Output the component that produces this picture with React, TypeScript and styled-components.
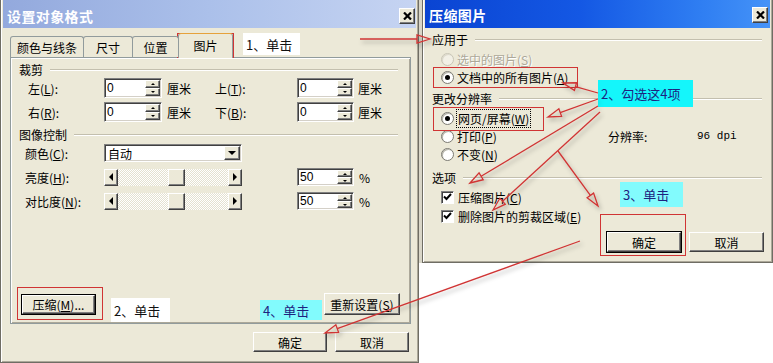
import styled, { createGlobalStyle, css } from 'styled-components';

const RED = '#d03434';
const FACE = '#ece9d8';

const GlobalStyle = createGlobalStyle`
  html, body { margin: 0; padding: 0; background: #fff; }
  body {
    font-family: "Noto Sans CJK SC", "Liberation Sans", sans-serif;
    font-size: 12px;
    color: #000;
  }
`;

const Stage = styled.div`
  position: relative;
  width: 773px;
  height: 363px;
  display: flex;
  overflow: hidden;
  background: #fff;
`;

const Window = styled.div<{ $width: number; $height: number }>`
  box-sizing: border-box;
  flex: none;
  width: ${(p) => p.$width}px;
  height: ${(p) => p.$height}px;
  display: flex;
  flex-direction: column;
  padding: 0 2px;
  background: ${FACE};
  border: 1px solid #6f6d64;
  border-top: none;
  box-shadow: inset 1px 0 #fff, inset -1px -1px #aca899;
`;

const TitleBar = styled.div<{ $active?: boolean }>`
  box-sizing: border-box;
  flex: none;
  height: 28px;
  display: flex;
  align-items: center;
  justify-content: space-between;
  padding: ${(p) => (p.$active ? '1px 2px 0 4px' : '4px 1px 0 4px')};
  background: ${(p) =>
    p.$active
      ? 'linear-gradient(90deg, #0a44d2 0%, #1458e4 45%, #2f7ef2 80%, #4593f8 100%)'
      : 'linear-gradient(90deg, #93a9dd 0%, #abc0ea 50%, #c6d4f2 100%)'};
`;

const Title = styled.span`
  font-size: 14px;
  font-weight: bold;
  color: #fff;
  letter-spacing: 0.4px;
`;

const CloseButton = styled.div`
  box-sizing: border-box;
  width: 16px;
  height: 16px;
  display: flex;
  align-items: center;
  justify-content: center;
  background: ${FACE};
  border: 1px solid;
  border-color: #fff #404040 #404040 #fff;
  box-shadow: inset -1px -1px #808080;
`;

const CloseIcon = () => (
  <svg width="9" height="8" viewBox="0 0 9 8">
    <path d="M1 0.5 L8 7.5 M8 0.5 L1 7.5" stroke="#000" strokeWidth="2.2" />
  </svg>
);

/* ---------- left dialog ---------- */

const LeftBody = styled.div`
  flex: 1;
  display: flex;
  flex-direction: column;
  padding: 5px 5px 0 7px;
`;

const TabStrip = styled.div`
  display: flex;
  align-items: flex-end;
  height: 24px;
  position: relative;
  z-index: 1;
`;

const Tab = styled.div<{ $width: number; $active?: boolean }>`
  box-sizing: border-box;
  width: ${(p) => p.$width}px;
  height: ${(p) => (p.$active ? 25 : 21)}px;
  display: flex;
  align-items: center;
  justify-content: center;
  border: 1px solid #919b9c;
  border-bottom: none;
  border-radius: 3px 3px 0 0;
  background: ${FACE};
  margin-right: -1px;
  ${(p) =>
    p.$active &&
    css`
      margin-bottom: -1px;
      padding-bottom: 1px;
      border-top-color: #e6a23c;
    `}
`;

const Panel = styled.div`
  box-sizing: border-box;
  height: 267px;
  display: flex;
  flex-direction: column;
  padding: 5px 10px 8px 8px;
  border: 1px solid #919b9c;
  box-shadow: inset 1px 1px #fff, inset -1px -1px #aca899;
`;

const GroupHeader = styled.div<{ $gap?: number }>`
  display: flex;
  align-items: center;
  gap: 7px;
  height: 14px;
  line-height: 14px;
  margin-top: ${(p) => p.$gap ?? 0}px;
  margin-right: 2px;
  white-space: nowrap;

  &::after {
    content: '';
    flex: 1;
    border-top: 1px solid #c3bfae;
    border-bottom: 1px solid #fff;
  }
`;

const FormRows = styled.div<{ $gap: number; $top: number }>`
  display: flex;
  flex-direction: column;
  gap: ${(p) => p.$gap}px;
  margin-top: ${(p) => p.$top}px;
`;

const FormRow = styled.div<{ $cols: string; $height: number }>`
  display: grid;
  grid-template-columns: ${(p) => p.$cols};
  align-items: center;
  height: ${(p) => p.$height}px;
  white-space: nowrap;
`;

const Label = styled.span<{ $indent?: number }>`
  padding-left: ${(p) => p.$indent ?? 0}px;
`;

const Unit = styled.span<{ $pad?: number }>`
  padding-left: ${(p) => p.$pad ?? 5}px;
`;

const Key = styled.u`
  text-underline-offset: 1px;
`;

const Field = styled.div<{ $width: number; $height: number }>`
  box-sizing: border-box;
  width: ${(p) => p.$width}px;
  height: ${(p) => p.$height}px;
  display: flex;
  background: #fff;
  border: 1px solid;
  border-color: #808080 #fff #fff #808080;
  box-shadow: inset 1px 1px #404040, inset -1px -1px #d4d0c8;
`;

const FieldText = styled.span`
  flex: 1;
  padding: 0 0 0 2px;
  display: flex;
  align-items: center;
  font-family: "Liberation Sans", "Noto Sans CJK SC", sans-serif;
  font-size: 12px;
`;

const ComboText = styled.span`
  flex: 1;
  padding-left: 3px;
  display: flex;
  align-items: center;
`;

const Spinner = styled.div`
  width: 15px;
  display: flex;
  flex-direction: column;
  margin: 1px 1px 1px 0;
`;

const Raised = css`
  box-sizing: border-box;
  background: ${FACE};
  border: 1px solid;
  border-color: #fff #404040 #404040 #fff;
  box-shadow: inset -1px -1px #808080;
`;

const SpinButton = styled.div<{ $dir: 'up' | 'down' }>`
  ${Raised};
  flex: 1;
  display: flex;
  align-items: center;
  justify-content: center;

  &::after {
    content: '';
    border-left: 2px solid transparent;
    border-right: 2px solid transparent;
    ${(p) =>
      p.$dir === 'up' ? 'border-bottom: 2px solid #000;' : 'border-top: 2px solid #000;'}
  }
`;

const DropButton = styled.div`
  ${Raised};
  width: 16px;
  margin: 1px 1px 1px 0;
  display: flex;
  align-items: center;
  justify-content: center;

  &::after {
    content: '';
    border-left: 4px solid transparent;
    border-right: 4px solid transparent;
    border-top: 4px solid #000;
  }
`;

const ScrollBar = styled.div`
  width: 138px;
  height: 17px;
  display: flex;
`;

const ScrollArrow = styled.div<{ $dir: 'left' | 'right' }>`
  ${Raised};
  width: 14px;
  display: flex;
  align-items: center;
  justify-content: center;

  &::after {
    content: '';
    border-top: 4px solid transparent;
    border-bottom: 4px solid transparent;
    ${(p) =>
      p.$dir === 'left' ? 'border-right: 4px solid #000;' : 'border-left: 4px solid #000;'}
  }
`;

const ScrollTrack = styled.div`
  flex: 1;
  display: flex;
  justify-content: center;
  padding-left: 6px;
  background: repeating-conic-gradient(#fff 0 25%, #e4e1d0 0 50%) 0 0 / 2px 2px;
`;

const ScrollThumb = styled.div`
  ${Raised};
  width: 17px;
`;

const PanelFooter = styled.div`
  margin-top: auto;
  height: 22px;
  display: flex;
  align-items: center;
  justify-content: space-between;
  padding-left: 3px;
`;

const Button = styled.div<{ $width: number; $height?: number; $strong?: boolean }>`
  ${Raised};
  width: ${(p) => p.$width}px;
  height: ${(p) => p.$height ?? 20}px;
  display: flex;
  align-items: center;
  justify-content: center;
  white-space: nowrap;
  ${(p) =>
    p.$strong &&
    css`
      outline: 1px solid #000;
    `}
`;

const DialogButtons = styled.div<{ $top: number; $right: number }>`
  display: flex;
  justify-content: flex-end;
  gap: 8px;
  margin-top: ${(p) => p.$top}px;
  margin-right: ${(p) => p.$right}px;
`;

/* ---------- right dialog ---------- */

const RightColumn = styled.div`
  flex: 1;
  display: flex;
  flex-direction: column;
  padding-left: 3px;
  background: linear-gradient(#d9d6c8 0 263px, #fff 263px);
`;

const RightBody = styled.div`
  flex: 1;
  display: flex;
  flex-direction: column;
  padding: 5px 6px 0 7px;
`;

const Options = styled.div<{ $top: number; $gap?: number }>`
  display: flex;
  flex-direction: column;
  gap: ${(p) => p.$gap ?? 0}px;
  margin-top: ${(p) => p.$top}px;
  padding-left: 9px;
`;

const OptionRow = styled.div<{ $disabled?: boolean }>`
  display: flex;
  align-items: center;
  height: 18px;
  white-space: nowrap;
  color: ${(p) => (p.$disabled ? '#aca899' : '#000')};
  text-shadow: ${(p) => (p.$disabled ? '1px 1px #fff' : 'none')};
`;

const ResolutionGrid = styled.div`
  display: grid;
  grid-template-columns: 167px 89px auto;
  grid-auto-rows: 18px;
  align-items: center;
  margin-top: 3px;
  padding-left: 9px;
  white-space: nowrap;
`;

const Radio = styled.span<{ $checked?: boolean; $disabled?: boolean }>`
  box-sizing: border-box;
  position: relative;
  width: 13px;
  height: 13px;
  margin-right: 3px;
  border-radius: 50%;
  background: ${(p) => (p.$disabled ? '#f2f0e6' : '#fff')};
  border: 1px solid ${(p) => (p.$disabled ? '#c9c6b6' : '#7b7a72')};
  box-shadow: inset 1px 1px ${(p) => (p.$disabled ? '#dcd9cb' : '#b8b6ab')};

  &::after {
    content: '';
    display: ${(p) => (p.$checked ? 'block' : 'none')};
    position: absolute;
    left: 3px;
    top: 3px;
    width: 5px;
    height: 5px;
    border-radius: 50%;
    background: #000;
  }
`;

const Check = styled.span`
  box-sizing: border-box;
  width: 13px;
  height: 13px;
  margin-right: 4px;
  display: flex;
  align-items: center;
  justify-content: center;
  background: #fff;
  border: 1px solid;
  border-color: #808080 #fff #fff #808080;
  box-shadow: inset 1px 1px #404040;
`;

const CheckIcon = () => (
  <svg width="9" height="8" viewBox="0 0 9 8">
    <path d="M1 3.5 L3.5 6 L8 1" stroke="#000" strokeWidth="2" fill="none" />
  </svg>
);

const FocusText = styled.span`
  outline: 1px dotted #000;
  outline-offset: 0;
  padding: 0 1px;
`;

const MonoText = styled.span`
  font-family: "Liberation Mono", "DejaVu Sans Mono", monospace;
  font-size: 11px;
`;

/* ---------- annotations ---------- */

const RedFrame = styled.div<{ $x: number; $y: number; $w: number; $h: number }>`
  position: absolute;
  left: ${(p) => p.$x}px;
  top: ${(p) => p.$y}px;
  width: ${(p) => p.$w}px;
  height: ${(p) => p.$h}px;
  box-sizing: border-box;
  border: 1px solid ${RED};
  pointer-events: none;
`;

const Note = styled.div<{ $x: number; $y: number; $w: number; $h: number; $tone: 'white' | 'cyan' | 'aqua' }>`
  position: absolute;
  left: ${(p) => p.$x}px;
  top: ${(p) => p.$y}px;
  width: ${(p) => p.$w}px;
  height: ${(p) => p.$h}px;
  box-sizing: border-box;
  padding-left: 3px;
  display: flex;
  align-items: center;
  font-size: 13px;
  white-space: nowrap;
  background: ${(p) => (p.$tone === 'white' ? '#fff' : p.$tone === 'cyan' ? '#14f6fb' : '#82fbfd')};
  color: ${(p) => (p.$tone === 'white' ? '#111' : '#1d2380')};
`;

const ArrowLayer = styled.svg`
  position: absolute;
  left: 0;
  top: 0;
  pointer-events: none;
`;

function Arrow({ x1, y1, x2, y2 }: { x1: number; y1: number; x2: number; y2: number }) {
  const len = Math.hypot(x2 - x1, y2 - y1);
  const ux = (x2 - x1) / len;
  const uy = (y2 - y1) / len;
  const bx = x2 - ux * 13;
  const by = y2 - uy * 13;
  const px = -uy * 4;
  const py = ux * 4;
  return (
    <g>
      <line x1={x1} y1={y1} x2={bx} y2={by} />
      <polygon points={`${x2},${y2} ${bx + px},${by + py} ${bx - px},${by - py}`} />
    </g>
  );
}

const tabs = [
  { label: '颜色与线条', width: 74 },
  { label: '尺寸', width: 50 },
  { label: '位置', width: 47 },
  { label: '图片', width: 55, active: true },
];

const cropRows = [
  { a: '左', ak: 'L', b: '上', bk: 'T' },
  { a: '右', ak: 'R', b: '下', bk: 'B' },
];

const arrows = [
  { x1: 360, y1: 39, x2: 430, y2: 39 },
  { x1: 598, y1: 93, x2: 563, y2: 83 },
  { x1: 598, y1: 99, x2: 548, y2: 117 },
  { x1: 598, y1: 106, x2: 470, y2: 183 },
  { x1: 600, y1: 112, x2: 493, y2: 210 },
  { x1: 558, y1: 151, x2: 598, y2: 206 },
  { x1: 580, y1: 241, x2: 325, y2: 333 },
];

function NumberField({ value, width, height }: { value: string; width: number; height: number }) {
  return (
    <Field $width={width} $height={height}>
      <FieldText>{value}</FieldText>
      <Spinner>
        <SpinButton $dir="up" />
        <SpinButton $dir="down" />
      </Spinner>
    </Field>
  );
}

function Slider() {
  return (
    <ScrollBar>
      <ScrollArrow $dir="left" />
      <ScrollTrack>
        <ScrollThumb />
      </ScrollTrack>
      <ScrollArrow $dir="right" />
    </ScrollBar>
  );
}

export default function App() {
  return (
    <>
      <GlobalStyle />
      <Stage>
        <Window $width={419} $height={363}>
          <TitleBar>
            <Title>设置对象格式</Title>
            <CloseButton>
              <CloseIcon />
            </CloseButton>
          </TitleBar>
          <LeftBody>
            <TabStrip>
              {tabs.map((t) => (
                <Tab key={t.label} $width={t.width} $active={t.active}>
                  {t.label}
                </Tab>
              ))}
            </TabStrip>
            <Panel>
              <GroupHeader>裁剪</GroupHeader>
              <FormRows $gap={4} $top={1}>
                {cropRows.map((r) => (
                  <FormRow key={r.a} $cols="85px 58px 53px 82px 57px auto" $height={20}>
                    <Label $indent={9}>
                      {r.a}(<Key>{r.ak}</Key>):
                    </Label>
                    <NumberField value="0" width={58} height={20} />
                    <Unit>厘米</Unit>
                    <Label>
                      {r.b}(<Key>{r.bk}</Key>):
                    </Label>
                    <NumberField value="0" width={57} height={20} />
                    <Unit $pad={4}>厘米</Unit>
                  </FormRow>
                ))}
              </FormRows>
              <GroupHeader $gap={6}>图像控制</GroupHeader>
              <FormRows $gap={6} $top={2}>
                <FormRow $cols="85px 138px" $height={18}>
                  <Label $indent={6}>
                    颜色(<Key>C</Key>):
                  </Label>
                  <Field $width={138} $height={18}>
                    <ComboText>自动</ComboText>
                    <DropButton />
                  </Field>
                </FormRow>
                <FormRow $cols="85px 138px 55px 57px auto" $height={18}>
                  <Label $indent={6}>
                    亮度(<Key>H</Key>):
                  </Label>
                  <Slider />
                  <span />
                  <NumberField value="50" width={57} height={18} />
                  <Unit $pad={5}>%</Unit>
                </FormRow>
                <FormRow $cols="85px 138px 55px 57px auto" $height={18}>
                  <Label $indent={6}>
                    对比度(<Key>N</Key>):
                  </Label>
                  <Slider />
                  <span />
                  <NumberField value="50" width={57} height={18} />
                  <Unit $pad={5}>%</Unit>
                </FormRow>
              </FormRows>
              <PanelFooter>
                <Button $width={73} $height={19} $strong>
                  压缩(<Key>M</Key>)...
                </Button>
                <Button $width={76} $height={22}>
                  重新设置(<Key>S</Key>)
                </Button>
              </PanelFooter>
            </Panel>
            <DialogButtons $top={8} $right={2}>
              <Button $width={74}>确定</Button>
              <Button $width={74}>取消</Button>
            </DialogButtons>
          </LeftBody>
        </Window>

        <RightColumn>
          <Window $width={351} $height={263}>
            <TitleBar $active>
              <Title>压缩图片</Title>
              <CloseButton>
                <CloseIcon />
              </CloseButton>
            </TitleBar>
            <RightBody>
              <GroupHeader>应用于</GroupHeader>
              <Options $top={3}>
                <OptionRow $disabled>
                  <Radio $disabled />
                  选中的图片(<Key>S</Key>)
                </OptionRow>
                <OptionRow>
                  <Radio $checked />
                  文档中的所有图片(<Key>A</Key>)
                </OptionRow>
              </Options>
              <GroupHeader $gap={6}>更改分辨率</GroupHeader>
              <ResolutionGrid>
                <OptionRow>
                  <Radio $checked />
                  <FocusText>
                    网页/屏幕(<Key>W</Key>)
                  </FocusText>
                </OptionRow>
                <span />
                <span />
                <OptionRow>
                  <Radio />
                  打印(<Key>P</Key>)
                </OptionRow>
                <span>分辨率:</span>
                <MonoText>96 dpi</MonoText>
                <OptionRow>
                  <Radio />
                  不变(<Key>N</Key>)
                </OptionRow>
              </ResolutionGrid>
              <GroupHeader $gap={8}>选项</GroupHeader>
              <Options $top={3} $gap={1}>
                <OptionRow>
                  <Check>
                    <CheckIcon />
                  </Check>
                  压缩图片(<Key>C</Key>)
                </OptionRow>
                <OptionRow>
                  <Check>
                    <CheckIcon />
                  </Check>
                  删除图片的剪裁区域(<Key>E</Key>)
                </OptionRow>
              </Options>
              <DialogButtons $top={7} $right={0}>
                <Button $width={74} $strong>
                  确定
                </Button>
                <Button $width={75}>取消</Button>
              </DialogButtons>
            </RightBody>
          </Window>
        </RightColumn>

        <RedFrame $x={177} $y={33} $w={57} $h={25} />
        <Note $x={243} $y={33} $w={57} $h={22} $tone="white">1、单击</Note>
        <RedFrame $x={17} $y={287} $w={86} $h={33} />
        <Note $x={111} $y={298} $w={59} $h={24} $tone="white">2、单击</Note>
        <Note $x={260} $y={300} $w={62} $h={20} $tone="aqua">4、单击</Note>

        <RedFrame $x={433} $y={67} $w={145} $h={21} />
        <RedFrame $x={433} $y={107} $w={111} $h={24} />
        <Note $x={598} $y={80} $w={95} $h={27} $tone="cyan">2、勾选这4项</Note>
        <Note $x={620} $y={182} $w={63} $h={25} $tone="aqua">3、单击</Note>
        <RedFrame $x={600} $y={214} $w={86} $h={42} />

        <ArrowLayer width={773} height={363} viewBox="0 0 773 363">
          <defs>
            <filter id="arrowShadow" x="-10%" y="-10%" width="120%" height="120%">
              <feDropShadow dx="2" dy="3" stdDeviation="2" floodColor="#000" floodOpacity="0.3" />
            </filter>
          </defs>
          <g stroke={RED} strokeWidth="1.3" fill="none" filter="url(#arrowShadow)">
            {arrows.map((a, i) => (
              <Arrow key={i} {...a} />
            ))}
          </g>
        </ArrowLayer>
      </Stage>
    </>
  );
}
